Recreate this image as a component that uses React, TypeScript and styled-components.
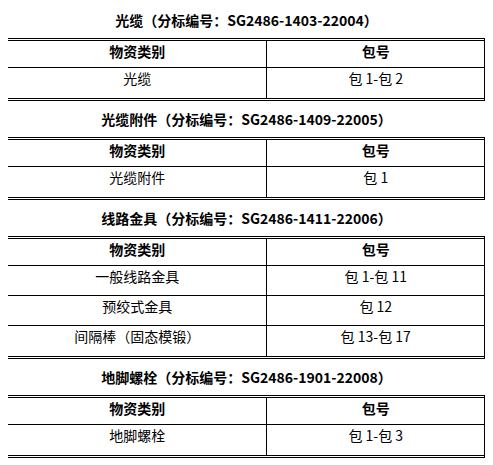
import React from 'react';
import styled, { createGlobalStyle } from 'styled-components';

const GlobalStyle = createGlobalStyle`
  html, body {
    margin: 0;
    padding: 0;
    background: #fff;
  }
  body {
    padding: 2px 8px 0;
    color: #000;
    font-family: 'Noto Sans CJK SC', 'Noto Sans', sans-serif;
    font-size: 14px;
  }
`;

const Page = styled.div`
  display: flex;
  flex-direction: column;
`;

const Title = styled.h2`
  margin: 0;
  height: 36px;
  line-height: 36px;
  font-size: 14px;
  font-weight: 700;
  text-align: center;
`;

const Table = styled.table`
  width: 100%;
  border-collapse: separate;
  border-spacing: 0;
  border-top: 3px double #000;
  border-bottom: 3px double #000;
  border-right: 1px solid #000;
  table-layout: fixed;
`;

type CellProps = {
  $last?: boolean;
};

const HeadCell = styled.th`
  padding: 0 0 6px;
  line-height: 20px;
  font-size: 14px;
  font-weight: 700;
  text-align: center;
  vertical-align: top;
  border-bottom: 1px solid #000;

  &:first-child {
    width: 54.3%;
    border-right: 1px solid #000;
  }
`;

// the last row has no rule under it, so it takes the pixel back as padding
const Cell = styled.td<CellProps>`
  padding: 0 0 ${props => (props.$last ? '10px' : '9px')};
  line-height: 20px;
  font-size: 14px;
  text-align: center;
  vertical-align: top;
  border-bottom: ${props => (props.$last ? 'none' : '1px solid #000')};

  &:first-child {
    border-right: 1px solid #000;
  }
`;

type Section = {
  title: string;
  rows: [string, string][];
};

const sections: Section[] = [
  {
    title: '光缆（分标编号：SG2486-1403-22004）',
    rows: [['光缆', '包 1-包 2']],
  },
  {
    title: '光缆附件（分标编号：SG2486-1409-22005）',
    rows: [['光缆附件', '包 1']],
  },
  {
    title: '线路金具（分标编号：SG2486-1411-22006）',
    rows: [
      ['一般线路金具', '包 1-包 11'],
      ['预绞式金具', '包 12'],
      ['间隔棒（固态模锻）', '包 13-包 17'],
    ],
  },
  {
    title: '地脚螺栓（分标编号：SG2486-1901-22008）',
    rows: [['地脚螺栓', '包 1-包 3']],
  },
];

export default function App() {
  return (
    <>
      <GlobalStyle />
      <Page>
        {sections.map(section => (
          <React.Fragment key={section.title}>
            <Title>{section.title}</Title>
            <Table>
              <thead>
                <tr>
                  <HeadCell>物资类别</HeadCell>
                  <HeadCell>包号</HeadCell>
                </tr>
              </thead>
              <tbody>
                {section.rows.map(([kind, pkg], i) => {
                  const last = i === section.rows.length - 1;
                  return (
                    <tr key={kind}>
                      <Cell $last={last}>{kind}</Cell>
                      <Cell $last={last}>{pkg}</Cell>
                    </tr>
                  );
                })}
              </tbody>
            </Table>
          </React.Fragment>
        ))}
      </Page>
    </>
  );
}
